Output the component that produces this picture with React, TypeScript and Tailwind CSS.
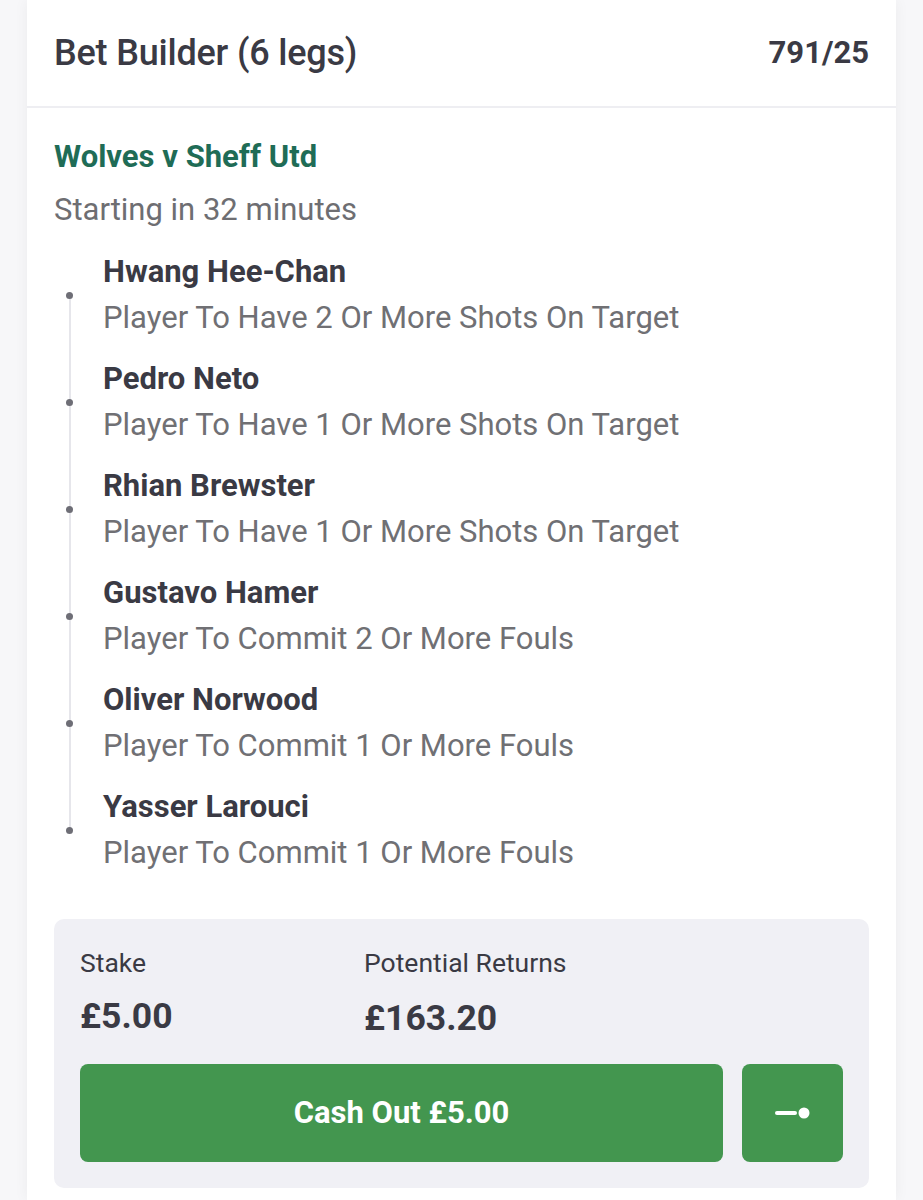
const legs = [
  { name: "Hwang Hee-Chan", market: "Player To Have 2 Or More Shots On Target" },
  { name: "Pedro Neto", market: "Player To Have 1 Or More Shots On Target" },
  { name: "Rhian Brewster", market: "Player To Have 1 Or More Shots On Target" },
  { name: "Gustavo Hamer", market: "Player To Commit 2 Or More Fouls" },
  { name: "Oliver Norwood", market: "Player To Commit 1 Or More Fouls" },
  { name: "Yasser Larouci", market: "Player To Commit 1 Or More Fouls" },
];

export default function App() {
  return (
    <main
      className="min-h-[1200px] bg-[#f7f7f9] px-[27px]"
      style={{ fontFamily: "Roboto, 'Liberation Sans', sans-serif" }}
    >
      <section className="min-h-[1200px] bg-white shadow-[0_0_14px_rgba(20,20,40,0.05)]">
        <header className="flex h-[108px] items-center justify-between border-b-2 border-[#eeeef2] px-[27px]">
          <h1 className="text-[36px] font-medium tracking-[-0.2px] text-[#3a3a44]">
            Bet Builder (6 legs)
          </h1>
          <span className="text-[31px] font-bold text-[#3a3a44]">791/25</span>
        </header>

        <div className="px-[27px] pt-[31px]">
          <h2 className="text-[31px] font-bold leading-[36px] text-[#1f6c56]">
            Wolves v Sheff Utd
          </h2>
          <p className="mt-[17px] text-[31px] leading-[36px] text-[#6e6e72]">
            Starting in 32 minutes
          </p>

          <ul className="mt-[24px] flex flex-col gap-[21px]">
            {legs.map((leg, i) => (
              <li key={leg.name} className="relative flex">
                {i < legs.length - 1 && (
                  <span className="absolute left-[15px] top-[43px] h-[107px] w-[2px] bg-[#e6e6eb]" />
                )}
                <span className="absolute left-[12px] top-[40px] h-[7px] w-[7px] rounded-full bg-[#6e6e76]" />
                <div className="pl-[49px]">
                  <div className="text-[31px] font-bold leading-[40px] text-[#3a3a44]">
                    {leg.name}
                  </div>
                  <div className="mt-[6px] text-[31px] leading-[40px] text-[#707074]">
                    {leg.market}
                  </div>
                </div>
              </li>
            ))}
          </ul>

          <div className="mt-[46px] rounded-[10px] bg-[#f0f0f5] px-[26px] pb-[26px] pt-[28px]">
            <div className="flex">
              <div className="w-[284px]">
                <div className="text-[26.5px] leading-[32px] text-[#3a3a44]">Stake</div>
                <div className="mt-[17px] text-[35.5px] font-bold leading-[40px] text-[#3a3a44]">
                  £5.00
                </div>
              </div>
              <div>
                <div className="text-[26.5px] leading-[32px] text-[#3a3a44]">
                  Potential Returns
                </div>
                <div className="mt-[19px] text-[35.5px] font-bold leading-[40px] text-[#3a3a44]">
                  £163.20
                </div>
              </div>
            </div>

            <div className="mt-[26px] flex gap-[19px]">
              <button className="flex h-[98px] flex-1 items-center justify-center rounded-[8px] bg-[#43964f] text-[31px] font-bold text-white">
                Cash Out £5.00
              </button>
              <button className="flex h-[98px] w-[101px] items-center justify-center rounded-[8px] bg-[#43964f]">
                <svg width="38" height="14" viewBox="0 0 38 14" fill="none">
                  <line
                    x1="3"
                    y1="7"
                    x2="21"
                    y2="7"
                    stroke="white"
                    strokeWidth="4"
                    strokeLinecap="round"
                  />
                  <circle cx="30" cy="7" r="5.5" fill="white" />
                </svg>
              </button>
            </div>
          </div>
        </div>
      </section>
    </main>
  );
}
